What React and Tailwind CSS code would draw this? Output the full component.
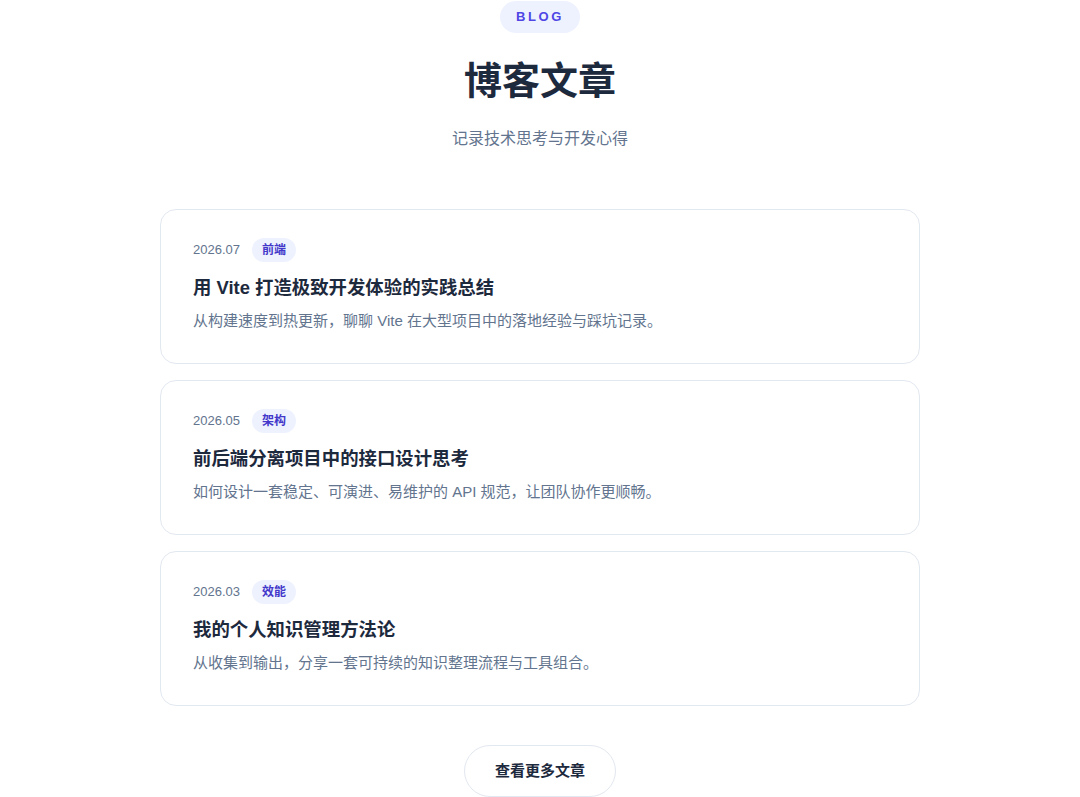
const POSTS = [
  {
    date: "2026.07",
    tag: "前端",
    title: "用 Vite 打造极致开发体验的实践总结",
    desc: "从构建速度到热更新，聊聊 Vite 在大型项目中的落地经验与踩坑记录。",
  },
  {
    date: "2026.05",
    tag: "架构",
    title: "前后端分离项目中的接口设计思考",
    desc: "如何设计一套稳定、可演进、易维护的 API 规范，让团队协作更顺畅。",
  },
  {
    date: "2026.03",
    tag: "效能",
    title: "我的个人知识管理方法论",
    desc: "从收集到输出，分享一套可持续的知识整理流程与工具组合。",
  },
];

export default function App() {
  return (
    <div
      className="min-h-screen bg-white flex flex-col items-center pt-px"
      style={{ fontFamily: '"Liberation Sans", "Noto Sans CJK SC", sans-serif' }}
    >
      <span className="h-8 px-4 flex items-center rounded-full bg-[#eef2ff] text-[#4f46e5] text-[13px] font-bold tracking-[0.2em]">
        BLOG
      </span>
      <h1 className="mt-[25px] text-[38px] leading-[46px] font-bold text-slate-800">博客文章</h1>
      <p className="mt-[23px] text-base leading-6 text-slate-500">记录技术思考与开发心得</p>

      <div className="mt-[58px] w-[760px] flex flex-col gap-4">
        {POSTS.map((post) => (
          <div key={post.date} className="bg-white border border-slate-200 rounded-2xl px-8 pt-7 pb-[30px]">
            <div className="flex items-center gap-3">
              <span className="text-[13px] text-slate-500">{post.date}</span>
              <span className="h-6 px-2.5 flex items-center rounded-full bg-[#eef2ff] text-[#4338ca] text-xs font-bold">
                {post.tag}
              </span>
            </div>
            <h2 className="mt-3 text-[18.4px] leading-7 font-bold text-slate-800">{post.title}</h2>
            <p className="mt-[7px] text-[15px] leading-6 text-slate-500">{post.desc}</p>
          </div>
        ))}
      </div>

      <button className="mt-[39px] h-[52px] px-[30px] rounded-full border border-slate-200 bg-white text-[15px] font-bold text-slate-800">
        查看更多文章
      </button>
    </div>
  );
}
